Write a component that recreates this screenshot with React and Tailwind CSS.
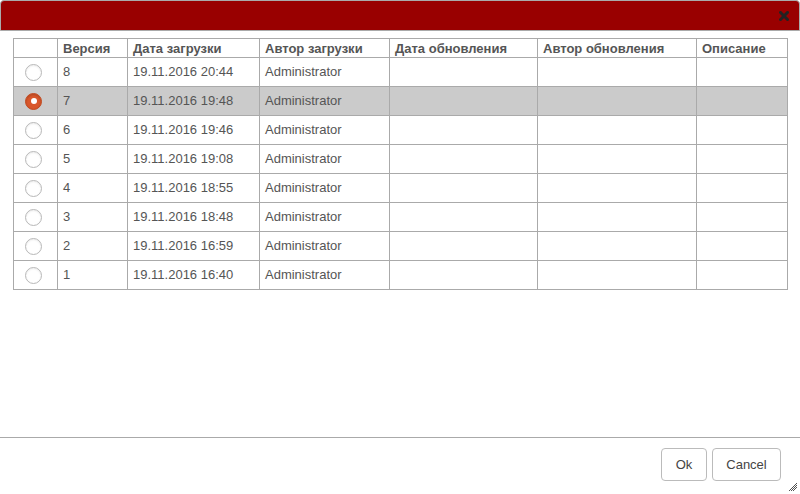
import { useState } from 'react';

const rows = [
  { v: '8', date: '19.11.2016 20:44' },
  { v: '7', date: '19.11.2016 19:48' },
  { v: '6', date: '19.11.2016 19:46' },
  { v: '5', date: '19.11.2016 19:08' },
  { v: '4', date: '19.11.2016 18:55' },
  { v: '3', date: '19.11.2016 18:48' },
  { v: '2', date: '19.11.2016 16:59' },
  { v: '1', date: '19.11.2016 16:40' },
];

function Radio({ checked }) {
  return checked ? (
    <span className="inline-flex w-[17px] h-[17px] rounded-full bg-[#d9572b] border border-[#c04a20] items-center justify-center shadow-[inset_0_1px_2px_rgba(0,0,0,0.2)]">
      <span className="w-[6px] h-[6px] rounded-full bg-white" />
    </span>
  ) : (
    <span className="inline-block w-[17px] h-[17px] rounded-full bg-white border border-[#b8b8b8] shadow-[inset_0_1px_2px_rgba(0,0,0,0.08)]" />
  );
}

export default function App() {
  const [selected, setSelected] = useState('7');

  return (
    <div className="w-[800px] h-[494px] bg-white flex flex-col font-['Liberation_Sans',Arial,sans-serif] text-[13px] text-[#555]">
      <div className="h-[31px] bg-[#990000] border border-[#aaa] rounded-t-[4px] flex items-center justify-end pr-[10px] pt-[1px]">
        <svg width="10" height="10" viewBox="0 0 10 10">
          <path d="M1.5 1.5 L8.5 8.5 M8.5 1.5 L1.5 8.5" stroke="#222" strokeWidth="3" strokeLinecap="square" />
        </svg>
      </div>

      <div className="flex-1 pt-[7px] pl-[13px] pr-[13px]">
        <table className="w-[774px] border-collapse table-fixed">
          <colgroup>
            <col className="w-[44px]" />
            <col className="w-[70px]" />
            <col className="w-[132px]" />
            <col className="w-[130px]" />
            <col className="w-[148px]" />
            <col className="w-[159px]" />
            <col className="w-[91px]" />
          </colgroup>
          <thead>
            <tr className="h-[19px] text-left font-bold text-[#555] leading-[17px]">
              <th className="border border-[#aaa]" />
              <th className="border border-[#aaa] px-[5px] font-bold">Версия</th>
              <th className="border border-[#aaa] px-[5px] font-bold">Дата загрузки</th>
              <th className="border border-[#aaa] px-[5px] font-bold">Автор загрузки</th>
              <th className="border border-[#aaa] px-[5px] font-bold">Дата обновления</th>
              <th className="border border-[#aaa] px-[5px] font-bold">Автор обновления</th>
              <th className="border border-[#aaa] px-[5px] font-bold">Описание</th>
            </tr>
          </thead>
          <tbody>
            {rows.map((r) => (
              <tr
                key={r.v}
                onClick={() => setSelected(r.v)}
                className={`h-[29px] ${selected === r.v ? 'bg-[#cbcbcb]' : 'bg-white'}`}
              >
                <td className="border border-[#aaa] text-left pl-[11px] align-middle">
                  <span className="flex">
                    <Radio checked={selected === r.v} />
                  </span>
                </td>
                <td className="border border-[#aaa] px-[5px]">{r.v}</td>
                <td className="border border-[#aaa] px-[5px]">{r.date}</td>
                <td className="border border-[#aaa] px-[5px]">Administrator</td>
                <td className="border border-[#aaa]" />
                <td className="border border-[#aaa]" />
                <td className="border border-[#aaa]" />
              </tr>
            ))}
          </tbody>
        </table>
      </div>

      <div className="h-[57px] border-t border-[#aaa] flex justify-end items-start pt-[10px] pr-[19px] gap-[5px] relative">
        <button className="h-[33px] w-[46px] border border-[#bbb] rounded-[4px] bg-white text-[#444] text-[13px]">Ok</button>
        <button className="h-[33px] w-[69px] border border-[#bbb] rounded-[4px] bg-white text-[#444] text-[13px]">Cancel</button>
        <svg className="absolute right-[2px] bottom-[2px]" width="12" height="12" viewBox="0 0 12 12">
          <path d="M11 3 L3 11 M11 7 L7 11" stroke="#555" strokeWidth="1" />
          <path d="M11 5 L5 11" stroke="#555" strokeWidth="1" />
        </svg>
      </div>
    </div>
  );
}
